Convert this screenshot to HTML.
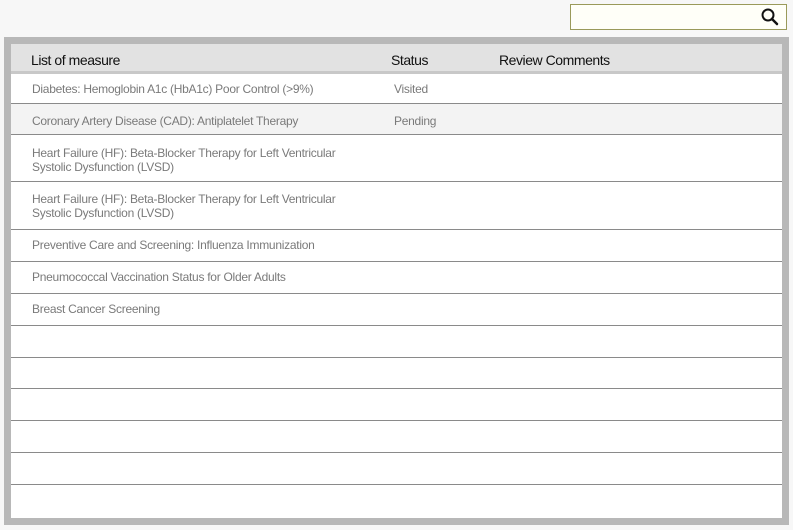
<!DOCTYPE html>
<html><head><style>
body{margin:0;width:793px;height:530px;background:#f7f7f7;font-family:"Liberation Sans",sans-serif;position:relative;overflow:hidden}
.search{position:absolute;left:570px;top:4px;width:215px;height:24px;border:1px solid #9a9a5a;background:#fffff8}
.outer{position:absolute;left:4px;top:37px;width:785px;height:488px;background:#b8b8b8}
.inner{position:absolute;left:7px;top:7px;width:771px;height:474px;background:#fff}
.hdr{height:30px;background:#e2e2e2;border-bottom:3px solid #c8c8c8;box-sizing:border-box;position:relative;font-size:14px;letter-spacing:-0.45px;color:#111}
.hdr span{position:absolute;top:8px}
.row{border-bottom:1px solid #8a8a8a;box-sizing:border-box;position:relative;font-size:12px;letter-spacing:-0.27px;color:#7a7a7a;line-height:14px}
.row .c1{position:absolute;left:21px;width:330px}
.row .c2{position:absolute;left:383px}
</style></head><body>
<div class="search"><svg width="20" height="20" style="position:absolute;right:6px;top:2px" viewBox="0 0 20 20"><circle cx="8" cy="8" r="5.5" fill="none" stroke="#111" stroke-width="2"/><line x1="12" y1="12" x2="17" y2="17" stroke="#111" stroke-width="2.5" stroke-linecap="round"/></svg></div>
<div class="outer"><div class="inner">
<div class="hdr"><span style="left:20px">List of measure</span><span style="left:380px">Status</span><span style="left:488px">Review Comments</span></div>
<div class="row" style="height:30px"><span class="c1" style="top:8px">Diabetes: Hemoglobin A1c (HbA1c) Poor Control (&gt;9%)</span><span class="c2" style="top:8px">Visited</span></div>
<div class="row" style="height:31px;background:#f3f3f3"><span class="c1" style="top:10px">Coronary Artery Disease (CAD): Antiplatelet Therapy</span><span class="c2" style="top:10px">Pending</span></div>
<div class="row" style="height:47px"><span class="c1" style="top:11px">Heart Failure (HF): Beta-Blocker Therapy for Left Ventricular Systolic Dysfunction (LVSD)</span></div>
<div class="row" style="height:48px"><span class="c1" style="top:10px">Heart Failure (HF): Beta-Blocker Therapy for Left Ventricular Systolic Dysfunction (LVSD)</span></div>
<div class="row" style="height:32px"><span class="c1" style="top:8px">Preventive Care and Screening: Influenza Immunization</span></div>
<div class="row" style="height:32px"><span class="c1" style="top:8px">Pneumococcal Vaccination Status for Older Adults</span></div>
<div class="row" style="height:32px"><span class="c1" style="top:8px">Breast Cancer Screening</span></div>
<div class="row" style="height:32px"></div>
<div class="row" style="height:31px"></div>
<div class="row" style="height:32px"></div>
<div class="row" style="height:32px"></div>
<div class="row" style="height:32px"></div>
</div></div>
</body></html>
